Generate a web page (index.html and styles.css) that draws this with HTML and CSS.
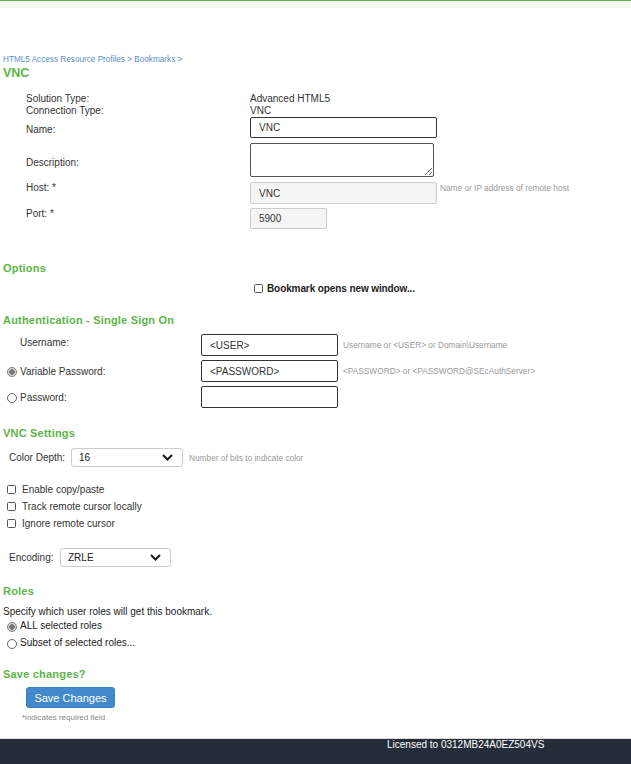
FILE: index.html
```html
<!DOCTYPE html>
<html>
<head>
<meta charset="utf-8">
<title>VNC Bookmark</title>
<link rel="stylesheet" href="styles.css">
</head>
<body>
<div class="topbar"></div>
<div class="content">
  <div class="crumbs"><a>HTML5 Access Resource Profiles</a> &gt; <a>Bookmarks</a> &gt;</div>
  <h1 class="title">VNC</h1>

  <div class="props">
    <div class="prow text-row"><span class="plabel">Solution Type:</span><span>Advanced HTML5</span></div>
    <div class="prow text-row"><span class="plabel">Connection Type:</span><span>VNC</span></div>
    <div class="prow name-row"><span class="plabel shift2">Name:</span><input class="field field-name" type="text" value="VNC"></div>
    <div class="prow desc-row"><span class="plabel shift2">Description:</span><textarea class="field field-desc"></textarea></div>
    <div class="prow top-row host-row"><span class="plabel">Host: *</span><input class="field field-host readonly" type="text" value="VNC"><span class="hint host-hint">Name or IP address of remote host</span></div>
    <div class="prow top-row port-row"><span class="plabel">Port: *</span><input class="field field-port readonly" type="text" value="5900"></div>
  </div>

  <h2 class="section options-h">Options</h2>
  <div class="newwin"><span class="cbox"></span><span class="newwin-label">Bookmark opens new window...</span></div>

  <h2 class="section auth-h">Authentication - Single Sign On</h2>
  <div class="auth">
    <div class="arow"><span class="radio-slot"></span><span class="alabel user-label">Username:</span><input class="field field-auth" type="text" value="&lt;USER&gt;"><span class="hint">Username or &lt;USER&gt; or Domain\Username</span></div>
    <div class="arow"><span class="radio-slot"><span class="radio checked"></span></span><span class="alabel">Variable Password:</span><input class="field field-auth" type="text" value="&lt;PASSWORD&gt;"><span class="hint">&lt;PASSWORD&gt; or &lt;PASSWORD@SEcAuthServer&gt;</span></div>
    <div class="arow"><span class="radio-slot"><span class="radio"></span></span><span class="alabel">Password:</span><input class="field field-auth" type="password" value=""></div>
  </div>

  <h2 class="section vnc-h">VNC Settings</h2>
  <div class="selrow depth-row">
    <span class="slabel">Color Depth:</span>
    <div class="select depth-select"><span>16</span><svg class="chev" width="11" height="7" viewBox="0 0 11 7"><polyline points="1,1 5.5,5.5 10,1" fill="none" stroke="#1a1a1a" stroke-width="2"/></svg></div>
    <span class="hint depth-hint">Number of bits to indicate color</span>
  </div>
  <div class="checks">
    <div class="crow"><span class="cbox"></span><span>Enable copy/paste</span></div>
    <div class="crow"><span class="cbox"></span><span>Track remote cursor locally</span></div>
    <div class="crow"><span class="cbox"></span><span>Ignore remote cursor</span></div>
  </div>
  <div class="selrow enc-row">
    <span class="slabel">Encoding:</span>
    <div class="select enc-select"><span>ZRLE</span><svg class="chev" width="11" height="7" viewBox="0 0 11 7"><polyline points="1,1 5.5,5.5 10,1" fill="none" stroke="#1a1a1a" stroke-width="2"/></svg></div>
  </div>

  <h2 class="section roles-h">Roles</h2>
  <p class="roles-desc">Specify which user roles will get this bookmark.</p>
  <div class="rrow"><span class="radio-slot"><span class="radio checked"></span></span><span>ALL selected roles</span></div>
  <div class="rrow"><span class="radio-slot"><span class="radio"></span></span><span>Subset of selected roles...</span></div>

  <h2 class="section save-h">Save changes?</h2>
  <button class="btn-save" type="button">Save Changes</button>
  <p class="required">*indicates required field</p>
</div>
<footer class="footer"><span>Licensed to 0312MB24A0EZ504VS</span></footer>
</body>
</html>
```

FILE: styles.css
```css
html, body {
  margin: 0;
  padding: 0;
  background: #fff;
}
body {
  font-family: "Liberation Sans", Arial, sans-serif;
  font-size: 10px;
  color: #333;
  height: 764px;
  overflow: hidden;
}
.topbar {
  height: 1px;
  background: #5cb847;
}
.content {
  padding-left: 3px;
}
.crumbs {
  margin-top: 53px;
  font-size: 8.2px;
  line-height: 12px;
  color: #5a8dc8;
}
.crumbs a {
  color: #5a8dc8;
}
.title {
  margin: 0;
  font-size: 12.5px;
  line-height: 14px;
  font-weight: bold;
  color: #5cb548;
}
.props {
  margin-left: 23px;
  margin-top: 13px;
}
.prow {
  display: flex;
  align-items: center;
}
.plabel {
  width: 224px;
  flex: none;
}
.shift2 {
  position: relative;
  top: 2px;
}
.text-row {
  line-height: 12px;
}
.name-row { margin-top: 0; }
.desc-row { margin-top: 5px; }
.host-row { margin-top: 5px; }
.port-row { margin-top: 4px; }
.top-row {
  align-items: flex-start;
}
.top-row .plabel {
  line-height: 12px;
}
.field {
  box-sizing: border-box;
  font-family: "Liberation Sans", Arial, sans-serif;
  font-size: 10px;
  color: #333;
  border: 1px solid #333;
  border-radius: 2px;
  padding: 0 0 0 8px;
  margin: 0;
  outline: none;
  background: #fff;
}
.field-name {
  width: 187px;
  height: 21px;
}
.field-desc {
  width: 184px;
  height: 34px;
  border-color: #555;
  resize: both;
  display: block;
}
.readonly {
  background: #f5f5f5;
  border-color: #ccc;
}
.field-host {
  width: 187px;
  height: 22px;
  padding-top: 1px;
}
.field-port {
  width: 77px;
  height: 21px;
}
.hint {
  font-size: 8.3px;
  color: #999;
  margin-left: 4px;
}
.host-hint {
  line-height: 12px;
  margin-left: 3px;
}
.section {
  margin: 0;
  font-size: 11px;
  line-height: 14px;
  font-weight: bold;
  color: #5cb548;
  letter-spacing: 0.2px;
}
.options-h { margin-top: 32px; }
.newwin {
  display: flex;
  align-items: center;
  margin-left: 251px;
  margin-top: 7px;
  height: 12px;
  font-weight: bold;
  color: #222;
  letter-spacing: -0.1px;
}
.newwin .cbox {
  margin-right: 4px;
}
.cbox {
  box-sizing: border-box;
  display: inline-block;
  width: 9px;
  height: 9px;
  border: 1px solid #555;
  border-radius: 1.5px;
  background: #fff;
  flex: none;
}
.auth-h { margin-top: 19px; }
.auth {
  margin-top: 7px;
  display: flex;
  flex-direction: column;
  gap: 4px;
}
.arow {
  display: flex;
  align-items: center;
  height: 22px;
  padding-left: 4px;
}
.radio-slot {
  width: 13px;
  flex: none;
  display: flex;
  align-items: center;
}
.radio {
  box-sizing: border-box;
  display: inline-block;
  width: 10px;
  height: 10px;
  border: 1px solid #666;
  border-radius: 50%;
  background: #fff;
  position: relative;
  top: 1px;
}
.radio.checked {
  border-color: #777;
  background: radial-gradient(circle, #777 0, #777 2.6px, #ddd 3px, #ddd 100%);
}
.alabel {
  width: 181px;
  flex: none;
}
.user-label {
  position: relative;
  top: -3px;
}
.field-auth {
  width: 137px;
  height: 22px;
}
.arow .hint {
  margin-left: 5px;
}
.vnc-h { margin-top: 18px; }
.selrow {
  display: flex;
  align-items: center;
  padding-left: 6px;
}
.depth-row { margin-top: 8px; }
.enc-row { margin-top: 16px; }
.slabel {
  flex: none;
}
.depth-row .slabel { width: 62px; }
.enc-row .slabel { width: 51px; }
.select {
  box-sizing: border-box;
  display: flex;
  align-items: center;
  justify-content: space-between;
  height: 19px;
  border: 1px solid #ccc;
  border-radius: 3px;
  padding: 0 9px 0 7px;
  font-size: 10px;
  color: #222;
  background: #fff;
}
.depth-select { width: 112px; }
.enc-select { width: 111px; }
.chev { display: block; }
.depth-hint { margin-left: 6px; }
.checks {
  margin-top: 14px;
  padding-left: 4px;
}
.crow {
  display: flex;
  align-items: center;
  height: 17px;
}
.crow .cbox {
  margin-right: 6px;
}
.roles-h { margin-top: 17px; }
.roles-desc {
  margin: 9px 0 0;
  line-height: 10px;
  color: #222;
}
.rrow {
  display: flex;
  align-items: center;
  height: 17px;
  padding-left: 4px;
  color: #222;
}
.save-h { margin-top: 16px; }
.btn-save {
  display: block;
  margin: 6px 0 0 23px;
  width: 89px;
  height: 21px;
  border: 1px solid #3a80c0;
  border-radius: 3px;
  background: #4189cb;
  color: #fff;
  font-family: "Liberation Sans", Arial, sans-serif;
  font-size: 11px;
  padding: 0;
}
.required {
  margin: 5px 0 0 19px;
  font-size: 8px;
  line-height: 10px;
  color: #888;
}
.footer {
  margin-top: 15px;
  border-top: 1px solid #ddd;
  height: 25px;
  background: #252d38;
  color: #fff;
  padding-left: 387px;
  font-size: 10px;
  line-height: 12px;
}
```
